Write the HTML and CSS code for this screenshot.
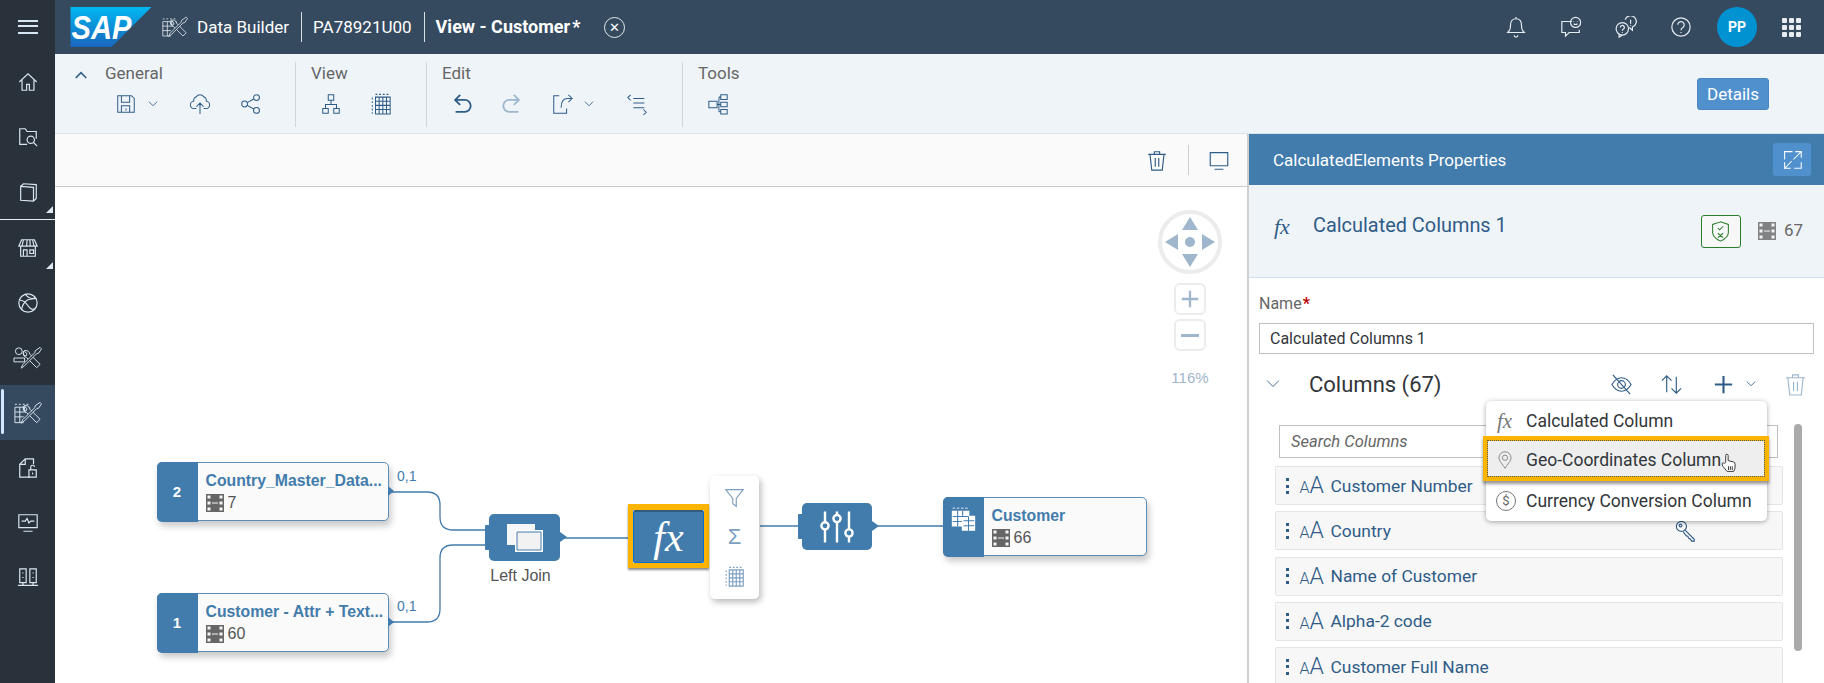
FILE: index.html
```html
<!DOCTYPE html>
<html lang="en">
<head>
<meta charset="utf-8">
<title>Data Builder - View - Customer</title>
<link rel="stylesheet" href="styles.css">
</head>
<body>
<svg class="defs" aria-hidden="true">
  <symbol id="i-db" viewBox="0 0 30 24"><path d="M2 3h2M6 3h2M10 3h2M14 3h2M2 6h15M2 6v16h9M2 11h15M2 16h9M7 6v16M12 6v5M17 6v3"/><path class="tool" d="M11 5a4.500 4.500 0 0 0 3 6.500L24.500 22l3.500-3.500L17.500 8A4.500 4.500 0 0 0 11.500 4.500l3 3-1 2.500-2.500-1z"/><path class="tool" d="M28 1l1.500 1.500-3 4.500-2 .5L12 20l-3.500 2.500L10 19 22.500 6.500l.5-2z"/></symbol>
  <symbol id="i-home" viewBox="0 0 24 24"><path d="M2.500 12 12 3l9.500 9M5.500 10v11h5v-6.500h3V21h5V10"/></symbol>
  <symbol id="i-find" viewBox="0 0 24 24"><path d="M11 20H3V3h6l2 3h10v8"/><circle cx="15" cy="15" r="4"/><path d="m18 18 4 4"/></symbol>
  <symbol id="i-book" viewBox="0 0 24 24"><path d="M4 6v15l14 1V7zM4 6l3-3 14 1v15l-3 3M7 3"/></symbol>
  <symbol id="i-store" viewBox="0 0 24 24"><path d="M5 3h14l3 7H2zM7 3l-1.500 7M11 3l-.5 7M14 3l.5 7M17 3l1.500 7M4 10v11h16V10M7 21v-7h4v7M14 14h4v4h-4z"/></symbol>
  <symbol id="i-globe" viewBox="0 0 24 24"><circle cx="12" cy="12" r="10"/><path d="M3 9c5 0 7 3 9 6s5 5 7 3M20 6c-3 3-6 1-9 3s-5 5-6 10M9 2c2 4 6 6 12 5"/></symbol>
  <symbol id="i-persontools" viewBox="0 0 30 24"><circle cx="6" cy="5" r="3.500"/><path d="M1 12h11v4H1z"/><path class="tool" d="M11 5a4.500 4.500 0 0 0 3 6.500L24.500 22l3.500-3.500L17.500 8A4.500 4.500 0 0 0 11.500 4.500l3 3-1 2.500-2.500-1z"/><path class="tool" d="M28 1l1.500 1.500-3 4.500-2 .5L12 20l-3.500 2.500L10 19 22.500 6.500l.5-2z"/></symbol>
  <symbol id="i-filelock" viewBox="0 0 24 24"><path d="M14 22H3V8l6-6h9v6M3 8h6V2"/><path d="M13 14h8v8h-8zM15 14v-3a2 2 0 0 1 4 0"/><path d="M17 17v2"/></symbol>
  <symbol id="i-pulse" viewBox="0 0 24 24"><path d="M2 3h20v14H2zM7 21h10M5 10h4l2-3 2 5 2-2h4"/></symbol>
  <symbol id="i-servers" viewBox="0 0 24 24"><path d="M3 2h7v15H3zM14 2h7v15h-7zM1 20h22M6.500 17v3M17.500 17v3M6.500 6v1M17.500 6v1M6.500 11v1M17.500 11v1"/></symbol>
  <symbol id="i-bell" viewBox="0 0 24 24"><path d="M3 18c2-2 3-3 3-8s3-7 6-7 6 2 6 7 1 6 3 8zM12 1v2M10 21a2 2 0 0 0 4 0"/></symbol>
  <symbol id="i-chat" viewBox="0 0 24 24"><path d="M13 6H2v12h4v4l4-4h11v-3"/><circle cx="17" cy="7" r="5.500"/><path d="M15 8.500c1 1 3 1 4 0M15 5.500v.5M19 5.500v.5"/></symbol>
  <symbol id="i-ask" viewBox="0 0 24 24"><circle cx="8" cy="14" r="6.800"/><path d="M5.800 12.500a2.200 2.200 0 1 1 3.400 1.800c-.9.600-1.200 1-1.200 1.700M8 17.500v.7M4.500 20v3l3.500-2"/><path d="M11 4a6.300 6.300 0 1 1 8 8v3.500l-3.500-3"/><path d="M17 4v4.500M17 10.200v.7"/></symbol>
  <symbol id="i-help" viewBox="0 0 24 24"><circle cx="12" cy="12" r="10"/><path d="M8.500 9.500a3.500 3.500 0 1 1 5.500 3c-1.500 1-2 1.500-2 3M12 17.500v1"/></symbol>
  <symbol id="i-save" viewBox="0 0 24 24"><path d="M3 3h15l3 3v15H3zM7 3v7h9V3M7 21v-7h9v7M12 17v2"/></symbol>
  <symbol id="i-chev" viewBox="0 0 24 24"><path d="m5 8 7 7 7-7"/></symbol>
  <symbol id="i-cloud" viewBox="0 0 24 24"><path d="M8 17H6a4 4 0 0 1-1-8 5 5 0 0 1 3-5 5 5 0 0 1 8 0 5 5 0 0 1 3 5 4 4 0 0 1-1 8h-2M12 23V11M8 15l4-4 4 4"/></symbol>
  <symbol id="i-share" viewBox="0 0 24 24"><circle cx="5" cy="12" r="3.200"/><circle cx="18" cy="5" r="3.200"/><circle cx="18" cy="19" r="3.200"/><path d="m8 10.500 7-4M8 13.500l7 4"/></symbol>
  <symbol id="i-tree" viewBox="0 0 24 24"><path d="M9 2h6v6H9zM3 17h6v5H3zM15 17h6v5h-6zM12 8v4.500M6 17v-4.500h12V17"/></symbol>
  <symbol id="i-grid" viewBox="0 0 24 24"><path d="M6 1.500h2M10 1.500h2M14 1.500h2M18 1.500h2M2.500 5v2M2.500 9v2M2.500 13v2M2.500 17v2M2.500 21v1.500M6 4.500h16v18.500H6zM6 9h16M6 13.500h16M6 18h16M10 4.500V23M14 4.500V23M18 4.500V23"/></symbol>
  <symbol id="i-undo" viewBox="0 0 24 24"><path d="M10 2 4.500 7.500 10 13M4.500 7.500H15a6.500 6.500 0 0 1 0 13H5"/></symbol>
  <symbol id="i-export" viewBox="0 0 24 24"><path d="M9 3H3v19h14v-5M19 2l4 4-4 4M23 6h-5c-5 0-7 4-7 10"/></symbol>
  <symbol id="i-code" viewBox="0 0 24 24"><path d="M5 2 2 5l3 3M8 6h12M8 11h12M8 16h12M19 18l3 3-3 3"/></symbol>
  <symbol id="i-model" viewBox="0 0 24 24"><path d="M2 9h9v7H2zM15 2h7v5h-7zM15 10h7v5h-7zM15 18h7v5h-7zM11 12.500h4M13 4.500v16M13 4.500h2M13 20.500h2"/></symbol>
  <symbol id="i-trash" viewBox="0 0 24 24"><path d="M2 5h20M9 5V2h6v3M4 5l2 18h12l2-18M10 9v10M14 9v10"/></symbol>
  <symbol id="i-screen" viewBox="0 0 24 24"><path d="M2 3h20v15H2zM7 22h10"/></symbol>
  <symbol id="i-expand" viewBox="0 0 24 24"><path d="M12 3H3v9M15 3h7v7M22 3l-9 9M3 22h7M3 15v7l8-8M22 15v7h-8"/></symbol>
  <symbol id="i-shield" viewBox="0 0 24 24"><path d="M12 1 3 4v9c0 5 5 8 9 10 4-2 9-5 9-10V4zM9 8l2 2 4-4M9 14l6 5M15 14l-6 5"/></symbol>
  <symbol id="i-film" viewBox="0 0 18 18"><path class="film-body" d="M0 0h18v18H0z"/><path class="film-hole" d="M1.500 1.500h3v3h-3zM1.500 7.500h3v3h-3zM1.500 13.500h3v3h-3zM13.500 1.500h3v3h-3zM13.500 7.500h3v3h-3zM13.500 13.500h3v3h-3zM6 8.500h6v1H6z"/></symbol>
  <symbol id="i-eyeoff" viewBox="0 0 24 24"><path d="M2 12c3-5 7-7 10-7s7 2 10 7c-3 5-7 7-10 7s-7-2-10-7z"/><circle cx="12" cy="12" r="4"/><path d="M3 2l18 20"/></symbol>
  <symbol id="i-sort" viewBox="0 0 24 24"><path d="M7 20V3M2 8l5-5 5 5M17 4v17M12 16l5 5 5-5"/></symbol>
  <symbol id="i-plus" viewBox="0 0 24 24"><path d="M12 3v18M3 12h18"/></symbol>
  <symbol id="i-pin" viewBox="0 0 24 24"><path d="M12 23C8 17 4 13 4 9a8 8 0 0 1 16 0c0 4-4 8-8 14z"/><circle cx="12" cy="9" r="3.500"/></symbol>
  <symbol id="i-key" viewBox="0 0 24 24"><circle cx="7" cy="7" r="5.500"/><circle cx="6" cy="6" r="1.500"/><path d="m11 11 10 10v2h-3l-1-2-2-1-1-2-2-1-3-4"/></symbol>
  <symbol id="i-filter" viewBox="0 0 24 24"><path d="M2 3h20l-8 10v9l-4-3v-6z"/></symbol>
  <symbol id="i-sliders" viewBox="0 0 30 30"><path d="M5 2v9M5 17v11M15 2v3M15 11v17M25 2v15M25 23v5"/><circle cx="5" cy="14" r="3"/><circle cx="15" cy="8" r="3"/><circle cx="25" cy="20" r="3"/></symbol>
  <symbol id="i-table" viewBox="0 0 30 30"><path d="M2 2h3M7 2h3M12 2h3M17 2h3"/><path class="solid" d="M1 5h21v6h7v18H13v-5H1z"/><path class="cut" d="M2 12h19M2 18h11M8 5v19M14 5v6M15 17h13M15 23h13M21 12v17"/></symbol>
  <symbol id="i-join" viewBox="0 0 38 30"><path class="solid" d="M1 1h28v21H1z"/><path class="cut-fill" d="M9 7h28v22H9z"/><path class="back-fill" d="M11 9h24v18H11z"/></symbol>
</svg>

<div class="app">
  <nav class="side">
    <div class="side-top"><span class="burger"></span></div>
    <a class="side-item"><svg class="ic ic-side"><use href="#i-home"/></svg></a>
    <a class="side-item"><svg class="ic ic-side"><use href="#i-find"/></svg></a>
    <a class="side-item more"><svg class="ic ic-side"><use href="#i-book"/></svg></a>
    <div class="side-sep"></div>
    <a class="side-item more"><svg class="ic ic-side"><use href="#i-store"/></svg></a>
    <a class="side-item"><svg class="ic ic-side"><use href="#i-globe"/></svg></a>
    <a class="side-item"><svg class="ic ic-side-w"><use href="#i-persontools"/></svg></a>
    <a class="side-item active"><svg class="ic ic-side-w"><use href="#i-db"/></svg></a>
    <a class="side-item"><svg class="ic ic-side"><use href="#i-filelock"/></svg></a>
    <a class="side-item"><svg class="ic ic-side"><use href="#i-pulse"/></svg></a>
    <a class="side-item"><svg class="ic ic-side"><use href="#i-servers"/></svg></a>
  </nav>

  <div class="main">
    <header class="shell">
      <svg class="logo" viewBox="0 0 80 40" role="img" aria-label="SAP">
        <defs><linearGradient id="sapg" x1="0" y1="0" x2="0" y2="1"><stop offset="0" stop-color="#00b8f1"/><stop offset="1" stop-color="#1a66bd"/></linearGradient></defs>
        <path d="M0 0h81L41 40H0z" fill="url(#sapg)"/>
        <text x="1" y="32" class="logo-text" textLength="60" lengthAdjust="spacingAndGlyphs">SAP</text>
      </svg>
      <svg class="ic ic-crumb"><use href="#i-db"/></svg>
      <span class="crumb">Data Builder</span>
      <span class="crumb crumb-b">PA78921U00</span>
      <span class="crumb crumb-b crumb-strong">View - Customer<span class="dirty">*</span></span>
      <span class="close">&#10005;</span>
      <div class="shell-right">
        <svg class="ic ic-shell"><use href="#i-bell"/></svg>
        <svg class="ic ic-shell"><use href="#i-chat"/></svg>
        <svg class="ic ic-shell"><use href="#i-ask"/></svg>
        <svg class="ic ic-shell"><use href="#i-help"/></svg>
        <span class="avatar">PP</span>
        <span class="apps"><i></i><i></i><i></i><i></i><i></i><i></i><i></i><i></i><i></i></span>
      </div>
    </header>

    <section class="toolbar">
      <button class="collapse"><svg class="ic ic-chev-up"><use href="#i-chev"/></svg></button>
      <div class="group g-general">
        <div class="g-title">General</div>
        <div class="g-icons">
          <svg class="ic ic-tb"><use href="#i-save"/></svg>
          <svg class="ic ic-mini"><use href="#i-chev"/></svg>
          <svg class="ic ic-tb gap-l"><use href="#i-cloud"/></svg>
          <svg class="ic ic-tb gap-l"><use href="#i-share"/></svg>
        </div>
      </div>
      <div class="group g-view">
        <div class="g-title">View</div>
        <div class="g-icons">
          <svg class="ic ic-tb"><use href="#i-tree"/></svg>
          <svg class="ic ic-tb gap-m"><use href="#i-grid"/></svg>
        </div>
      </div>
      <div class="group g-edit">
        <div class="g-title">Edit</div>
        <div class="g-icons">
          <svg class="ic ic-tb strong"><use href="#i-undo"/></svg>
          <svg class="ic ic-tb gap-m faded flip"><use href="#i-undo"/></svg>
          <svg class="ic ic-tb gap-m"><use href="#i-export"/></svg>
          <svg class="ic ic-mini"><use href="#i-chev"/></svg>
          <svg class="ic ic-tb gap-s"><use href="#i-code"/></svg>
        </div>
      </div>
      <div class="group g-tools">
        <div class="g-title">Tools</div>
        <div class="g-icons">
          <svg class="ic ic-tb"><use href="#i-model"/></svg>
        </div>
      </div>
      <button class="details">Details</button>
    </section>

    <div class="work">
      <section class="canvas">
        <div class="canvas-bar">
          <svg class="ic ic-bar"><use href="#i-trash"/></svg>
          <span class="bar-sep"></span>
          <svg class="ic ic-bar"><use href="#i-screen"/></svg>
        </div>
        <div class="diagram">
          <svg class="wires" viewBox="0 0 1193 496">
            <path d="M335 305h38q13 0 13 13v12q0 13 13 13h32"/>
            <path d="M335 435h38q13 0 13-13v-51q0-13 13-13h32"/>
            <path d="M506 351h68"/>
            <path d="M706 339h38"/>
            <path d="M818 339h72"/>
          </svg>

          <span class="cardinal c-a">0,1</span>
          <span class="cardinal c-b">0,1</span>

          <div class="node n-country">
            <div class="node-tab">2</div>
            <div class="node-body">
              <div class="node-title">Country_Master_Data...</div>
              <div class="node-count"><svg class="film"><use href="#i-film"/></svg>7</div>
            </div>
            <i class="out-port"></i>
          </div>
          <div class="node n-attr">
            <div class="node-tab">1</div>
            <div class="node-body">
              <div class="node-title">Customer - Attr + Text...</div>
              <div class="node-count"><svg class="film"><use href="#i-film"/></svg>60</div>
            </div>
            <i class="out-port"></i>
          </div>

          <div class="op op-join">
            <i class="in-port"></i>
            <svg class="join-ic" viewBox="0 0 38 30"><use href="#i-join"/></svg>
            <i class="op-out"></i>
          </div>
          <div class="op-label">Left Join</div>

          <div class="calc-focus">
            <div class="calc"><span class="calc-fx">fx</span></div>
          </div>

          <div class="actions">
            <svg class="ic ic-act"><use href="#i-filter"/></svg>
            <span class="sigma">&Sigma;</span>
            <svg class="ic ic-act"><use href="#i-grid"/></svg>
          </div>

          <div class="op op-proj">
            <i class="in-port in-proj"></i>
            <svg class="sliders"><use href="#i-sliders"/></svg>
            <i class="op-out"></i>
          </div>

          <div class="node n-customer">
            <div class="node-tab tab-icon"><svg class="table-ic"><use href="#i-table"/></svg></div>
            <div class="node-body">
              <div class="node-title">Customer</div>
              <div class="node-count"><svg class="film"><use href="#i-film"/></svg>66</div>
            </div>
          </div>

          <div class="nav-ctl">
            <div class="pad">
              <i class="arr up"></i><i class="arr down"></i><i class="arr left"></i><i class="arr right"></i><i class="pad-dot"></i>
            </div>
            <div class="zoom-btn"><svg class="ic ic-zoom"><use href="#i-plus"/></svg></div>
            <div class="zoom-btn"><span class="minus"></span></div>
            <div class="zoom-val">116%</div>
          </div>
        </div>
      </section>

      <aside class="panel">
        <div class="panel-head">
          <span>CalculatedElements Properties</span>
          <button class="expand"><svg class="ic ic-expand"><use href="#i-expand"/></svg></button>
        </div>
        <div class="panel-sub">
          <span class="sub-fx">fx</span>
          <span class="sub-title">Calculated Columns 1</span>
          <button class="valid"><svg class="ic ic-shield"><use href="#i-shield"/></svg></button>
          <svg class="film sub-film"><use href="#i-film"/></svg>
          <span class="sub-count">67</span>
        </div>
        <div class="panel-body">
          <label class="name-label">Name<span class="req">*</span></label>
          <div class="name-input">Calculated Columns 1</div>
          <div class="cols-head">
            <svg class="ic ic-colchev"><use href="#i-chev"/></svg>
            <span class="cols-title">Columns (67)</span>
            <div class="cols-tools">
              <svg class="ic ic-col"><use href="#i-eyeoff"/></svg>
              <svg class="ic ic-col"><use href="#i-sort"/></svg>
              <svg class="ic ic-colplus"><use href="#i-plus"/></svg>
              <svg class="ic ic-colmini"><use href="#i-chev"/></svg>
              <svg class="ic ic-col faded"><use href="#i-trash"/></svg>
            </div>
          </div>
          <div class="cols-list">
            <div class="search">Search Columns</div>
            <div class="row"><span class="dots"></span><span class="aa"><small>A</small>A</span><span class="row-name">Customer Number</span></div>
            <div class="row"><span class="dots"></span><span class="aa"><small>A</small>A</span><span class="row-name">Country</span><svg class="ic ic-key"><use href="#i-key"/></svg></div>
            <div class="row"><span class="dots"></span><span class="aa"><small>A</small>A</span><span class="row-name">Name of Customer</span></div>
            <div class="row"><span class="dots"></span><span class="aa"><small>A</small>A</span><span class="row-name">Alpha-2 code</span></div>
            <div class="row"><span class="dots"></span><span class="aa"><small>A</small>A</span><span class="row-name">Customer Full Name</span></div>
            <div class="scroll-thumb"></div>
          </div>
          <div class="menu">
            <div class="menu-item"><span class="menu-fx">fx</span>Calculated Column</div>
            <div class="menu-item focus"><svg class="ic ic-menu"><use href="#i-pin"/></svg>Geo-Coordinates Column
              <svg class="hand" viewBox="0 0 16 20"><path d="M5 10V2.500a1.300 1.300 0 0 1 2.600 0V8l6 1.500c1 .3 1.400 1 1.400 2V16l-1.500 3.500h-7L2 14l-1-2.500c0-1 1.500-1.500 2.500-.5z"/><path class="hand-l" d="M8 14v4M10 14v4M12 14v4"/></svg>
            </div>
            <div class="menu-item"><span class="menu-dollar">$</span>Currency Conversion Column</div>
          </div>
        </div>
      </aside>
    </div>
  </div>
</div>
</body>
</html>
```
FILE: styles.css
```css
* { box-sizing: border-box; }
html, body { margin: 0; height: 100%; overflow: hidden; }
body { font-family: Roboto, "Liberation Sans", sans-serif; color: #32363a; background: #fff; }
.defs { position: absolute; width: 0; height: 0; }
.ic { fill: none; stroke: currentColor; stroke-width: 1.3; display: block; flex: none; }
button { font: inherit; border: 0; padding: 0; background: none; }
.tool { fill: var(--tool-bg, #29313a); }

.app { display: flex; height: 683px; width: 1824px; }

/* side navigation */
.side { width: 55px; flex: none; background: #29313a; color: #d9e6f2; display: flex; flex-direction: column; }
.side-top { height: 54px; display: flex; align-items: center; justify-content: center; }
.burger { width: 20px; height: 14px; margin-top: -1px; border-top: 2.500px solid #d5e6f5; border-bottom: 2.500px solid #d5e6f5; position: relative; }
.burger::after { content: ""; position: absolute; left: 0; right: 0; top: 3.200px; height: 2.500px; background: #d5e6f5; }
.side-item { height: 55px; display: flex; align-items: center; justify-content: center; position: relative; }
.side-sep { height: 1px; background: #e8eef4; }
.ic-side { width: 22px; height: 22px; }
.ic-side-w { width: 29px; height: 24px; stroke-width: 1; }
.more::after { content: ""; position: absolute; right: 2px; bottom: 6px; border-style: solid; border-width: 0 0 7px 7px; border-color: transparent transparent #dfe9f3 transparent; }
.active { background: #354a5f; --tool-bg: #354a5f; }
.active::before { content: ""; position: absolute; left: 1px; top: 4px; bottom: 6px; width: 3px; border-radius: 2px; background: #d1e8ff; }

.main { flex: 1; min-width: 0; display: flex; flex-direction: column; }

/* shell */
.shell { height: 54px; flex: none; background: #354a5f; color: #fff; display: flex; align-items: center; padding-left: 15px; --tool-bg: #354a5f; }
.logo { width: 81px; height: 40px; margin-right: 10px; }
.logo-text { font: italic 700 33px "Liberation Sans", sans-serif; fill: #fff; }
.ic-crumb { width: 27px; height: 24px; margin-right: 9px; stroke: #e3e9ef; stroke-width: .9; }
.crumb { font-size: 17px; white-space: nowrap; line-height: 30px; }
.crumb-b { border-left: 1px solid #d9dfe5; margin-left: 12px; padding-left: 11px; }
.crumb-strong { font-weight: 700; font-size: 18px; }
.dirty { margin-left: 2px; }
.close { width: 21px; height: 21px; border: 1.300px solid #e6ebf0; border-radius: 50%; margin-left: 24px; font-size: 13px; line-height: 19px; text-align: center; }
.shell-right { margin-left: auto; display: flex; align-items: center; padding-right: 23px; }
.ic-shell { width: 22px; height: 22px; margin-right: 33px; stroke: #e6ecf2; }
.ic-shell:nth-child(4) { margin-right: 25px; }
.avatar { width: 40px; height: 40px; border-radius: 50%; background: #0092d1; font-size: 14px; font-weight: 700; line-height: 40px; text-align: center; margin-right: 25px; }
.apps { display: grid; grid-template-columns: repeat(3, 5px); gap: 2px; width: 19px; }
.apps i { width: 5px; height: 5px; background: #e6ecf2; border-radius: 1px; }

/* toolbar */
.toolbar { height: 80px; flex: none; background: #eff4f9; border-bottom: 1px solid #d9e4ee; display: flex; align-items: flex-start; padding-top: 8px; color: #2f5c87; position: relative; }
.collapse { width: 50px; padding-left: 17px; margin-top: 4px; color: #2f5c87; }
.ic-chev-up { width: 18px; height: 18px; transform: scaleY(-1); stroke-width: 2.200; }
.group { height: 65px; border-right: 1px solid #cfd6dc; flex: none; }
.g-title { font-size: 17px; color: #666; line-height: 22px; margin-top: 0; }
.g-general { width: 191px; }
.g-view { width: 131px; padding-left: 15px; }
.g-edit { width: 256px; padding-left: 15px; }
.g-tools { padding-left: 15px; border-right: 0; }
.g-icons { display: flex; align-items: center; height: 24px; margin-top: 8px; }
.g-general .g-icons { padding-left: 10px; }
.g-view .g-icons { padding-left: 9px; }
.g-edit .g-icons { padding-left: 9px; }
.g-tools .g-icons { padding-left: 9px; }
.ic-tb { width: 22px; height: 22px; stroke-width: 1.100; }
.ic-mini { width: 14px; height: 14px; margin-left: 9px; stroke-width: 1.500; }
.gap-l { margin-left: 29px; }
.gap-m { margin-left: 28px; }
.gap-s { margin-left: 30px; }
.strong { stroke-width: 2; }
.faded { color: #9db7cf; }
.flip { transform: scaleX(-1); stroke-width: 2; }
.details { position: absolute; right: 55px; top: 24px; width: 72px; height: 32px; background: #5091cd; border: 1px solid #4a87bf; border-radius: 3px; color: #fff; font-size: 17px; }

/* workspace */
.work { flex: 1; min-height: 0; display: flex; }
.canvas { flex: 1; min-width: 0; display: flex; flex-direction: column; background: #fff; border-right: 2px solid #cfcfcf; }
.canvas-bar { height: 53px; flex: none; background: #fafafa; border-bottom: 1px solid #ccc; display: flex; align-items: center; justify-content: flex-end; color: #2f5c87; padding-right: 17px; }
.ic-bar { width: 22px; height: 21px; stroke-width: 1.300; }
.bar-sep { width: 1px; height: 30px; background: #d0d0d0; margin: 0 19px 0 20px; }
.diagram { flex: 1; position: relative; font-family: "Liberation Sans", sans-serif; overflow: hidden; }
.wires { position: absolute; left: -1px; top: 0; width: 1193px; height: 496px; fill: none; stroke: #427cac; stroke-width: 1.300; }

.cardinal { position: absolute; font-size: 14px; color: #427cac; }
.c-a { left: 342px; top: 281px; }
.c-b { left: 342px; top: 411px; }

.node { position: absolute; width: 232px; height: 59px; display: flex; background: #fafafa; border: 1.500px solid #5a8db8; border-radius: 5px; box-shadow: 2px 5px 7px rgba(0,0,0,.22); }
.n-country { left: 102px; top: 275px; }
.n-attr { left: 102px; top: 406px; }
.n-customer { left: 888px; top: 310px; width: 204px; }
.node-tab { width: 41px; margin: -1.500px 0 -1.500px -1.500px; background: #427cac; border-radius: 5px 0 0 5px; color: #fff; font-weight: 700; font-size: 15px; display: flex; align-items: center; justify-content: center; }
.tab-icon { align-items: flex-start; padding-top: 9px; }
.table-ic { width: 25px; height: 26px; }
#i-table path { stroke: #fff; }
#i-table .solid { fill: #fff; stroke: none; }
#i-table .cut { stroke: #427cac; stroke-width: 1.300; fill: none; }
.node-body { padding: 8px 0 0 8px; min-width: 0; }
.node-title { font-weight: 700; font-size: 15.800px; line-height: 20px; color: #427cac; white-space: nowrap; }
.node-count { display: flex; align-items: center; gap: 4px; font-size: 16px; line-height: 22px; color: #555; margin-top: 1px; }
.film { width: 18px; height: 18px; display: block; flex: none; }
#i-film .film-body { fill: #666; }
#i-film .film-hole { fill: #f5f5f5; }
.out-port { position: absolute; right: -6px; top: 23px; border-style: solid; border-width: 5px 0 5px 6px; border-color: transparent transparent transparent #427cac; }

.op { position: absolute; background: #427cac; border-radius: 5px; display: flex; align-items: center; justify-content: center; }
.op-join { left: 434px; top: 327px; width: 71px; height: 47px; }
.op-proj { left: 747px; top: 316px; width: 70px; height: 47px; }
.in-port { position: absolute; left: -4px; top: 11px; width: 5px; height: 25px; background: #427cac; border-radius: 1px 0 0 1px; }
.in-proj { top: 11px; }
.op-out { position: absolute; right: -7px; top: 18px; border-style: solid; border-width: 5px 0 5px 7px; border-color: transparent transparent transparent #427cac; }
.join-ic { width: 38px; height: 30px; }
#i-join .solid { fill: #f4f6f8; stroke: none; }
#i-join .cut-fill { fill: #fff; stroke: none; }
#i-join .back-fill { fill: #f2f2f2; stroke: #427cac; stroke-width: 1; }
.op-label { position: absolute; left: 420px; top: 380px; width: 91px; text-align: center; font-size: 16px; color: #555; }
.sliders { width: 36px; height: 36px; fill: none; stroke: #fff; stroke-width: 2; }

.calc-focus { position: absolute; left: 573px; top: 317px; width: 81px; height: 64px; border: 5px solid #fbb500; border-top-width: 6px; box-shadow: 0 2px 2px rgba(0,0,0,.45); }
.calc { height: 100%; background: #427cac; border: 1px solid #0a6ed1; border-top: 2px solid #345b7c; border-radius: 2px; display: flex; align-items: center; justify-content: center; }
.calc-fx { font: italic 400 42px "Liberation Serif", serif; color: #fff; line-height: 1; }
.actions { position: absolute; left: 655px; top: 289px; width: 49px; height: 123px; background: #fff; border-radius: 5px; box-shadow: 2px 3px 6px rgba(0,0,0,.28); display: flex; flex-direction: column; align-items: center; justify-content: space-between; padding: 11px 0 12px; color: #7d9fc0; }
.ic-act { width: 21px; height: 21px; }
.sigma { font-size: 22px; line-height: 24px; color: #7d9fc0; }

.nav-ctl { position: absolute; left: 1103px; top: 23px; width: 64px; display: flex; flex-direction: column; align-items: center; }
.pad { width: 64px; height: 64px; border: 4px solid #ececec; border-radius: 50%; position: relative; margin-bottom: 9px; }
.arr { position: absolute; border-style: solid; border-color: transparent; }
.up { left: 20px; top: 3px; border-width: 0 8px 13px 8px; border-bottom-color: #9fb6cc; }
.down { left: 20px; bottom: 3px; border-width: 13px 8px 0 8px; border-top-color: #9fb6cc; }
.left { left: 3px; top: 20px; border-width: 8px 13px 8px 0; border-right-color: #9fb6cc; }
.right { right: 3px; top: 20px; border-width: 8px 0 8px 13px; border-left-color: #9fb6cc; }
.pad-dot { position: absolute; left: 23px; top: 23px; width: 10px; height: 10px; border-radius: 50%; background: #9fb6cc; }
.zoom-btn { width: 32px; height: 32px; border: 2px solid #ececec; border-radius: 6px; margin-bottom: 4px; display: flex; align-items: center; justify-content: center; background: #fff; }
.ic-zoom { width: 22px; height: 22px; color: #9fb6cc; stroke-width: 2.500; }
.minus { width: 18px; height: 3px; background: #9fb6cc; }
.zoom-val { font-size: 15px; color: #9fb6cc; margin-top: 14px; }

/* panel */
.panel { width: 575px; flex: none; display: flex; flex-direction: column; background: #fff; }
.panel-head { height: 51px; flex: none; background: #427cac; color: #fff; font-size: 17px; display: flex; align-items: center; justify-content: space-between; padding: 0 13px 0 24px; }
.expand { width: 38px; height: 33px; background: #5091cd; border-radius: 3px; display: flex; align-items: center; justify-content: center; color: #fff; }
.ic-expand { width: 21px; height: 21px; stroke-width: 1.200; }
.panel-sub { height: 93px; flex: none; background: #eff4f9; border-bottom: 1px solid #cfdeec; display: flex; align-items: flex-start; padding: 30px 21px 0 25px; }
.sub-fx { font: italic 400 22px "Liberation Serif", serif; color: #2f5c87; width: 39px; line-height: 24px; }
.sub-title { font-size: 19.900px; color: #2f5c87; line-height: 22px; }
.valid { margin-left: auto; width: 40px; height: 33px; border: 1px solid #2b7c2b; border-radius: 3px; background: #f7f7f7; display: flex; align-items: center; justify-content: center; color: #2b7c2b; }
.ic-shield { width: 21px; height: 23px; stroke-width: 1.200; }
.sub-film { margin: 7px 8px 0 17px; opacity: .8; }
.sub-count { font-size: 17px; color: #666; line-height: 30px; }

.panel-body { flex: 1; min-height: 0; position: relative; overflow: hidden; padding: 15px 10px 0 10px; }
.name-label { display: block; font-size: 16px; color: #666; line-height: 22px; }
.req { color: #bb0000; font-weight: 700; margin-left: 1px; }
.name-input { height: 31px; margin-top: 8px; border: 1px solid #bfbfbf; font-size: 16px; line-height: 29px; padding-left: 10px; color: #32363a; }
.cols-head { height: 30px; margin-top: 15px; display: flex; align-items: center; padding-left: 4px; color: #2f5c87; }
.ic-colchev { width: 20px; height: 20px; margin-right: 26px; stroke-width: 1.100; }
.cols-title { font-size: 22px; color: #32363a; }
.cols-tools { margin-left: auto; display: flex; align-items: center; padding-right: 0; }
.ic-col { width: 23px; height: 23px; margin-right: 27px; stroke-width: 1.200; }
.ic-col:first-child { margin-right: 27px; transform: translateX(-2px); }
.ic-col:nth-child(2) { transform: translateX(-2px); }
.ic-col:last-child { margin-right: 7px; margin-left: 26px; stroke-width: 1.200; }
.ic-colplus { width: 23px; height: 23px; stroke-width: 2.200; }
.ic-colmini { width: 14px; height: 14px; margin-left: 9px; stroke-width: 1.500; }
.cols-list { position: relative; margin-top: 26px; padding-left: 16px; padding-right: 31px; }
.search { height: 33px; margin: 0 5px 8px 4px; border: 1px solid #bfbfbf; font-style: italic; font-size: 16.500px; line-height: 31px; color: #666; padding-left: 11px; }
.row { height: 39px; margin-bottom: 6.300px; border: 1px solid #e5e5e5; border-radius: 2px; background: #f7f7f7; display: flex; align-items: center; padding-left: 10px; color: #2f5c87; }
.dots { width: 2.500px; height: 16px; background: repeating-linear-gradient(#2f5c87 0 3px, transparent 3px 6.500px); margin-right: 11px; }
.aa { font-size: 23px; font-weight: 300; width: 31px; line-height: 1; }
.aa small { font-size: 16px; }
.row-name { font-size: 17.400px; }
.ic-key { width: 22px; height: 22px; margin-left: 284px; stroke-width: 1.200; }
.scroll-thumb { position: absolute; right: 12px; top: -1px; width: 8px; height: 227px; background: #aaa; border-radius: 4px; }

.menu { position: absolute; left: 237px; top: 123px; width: 281px; height: 120px; background: #fff; border-radius: 5px; box-shadow: 0 1px 5px rgba(0,0,0,.35); font-size: 17.500px; }
.menu-item { height: 40px; display: flex; align-items: center; padding-left: 40px; position: relative; white-space: nowrap; }
.menu-fx { position: absolute; left: 11px; font: italic 400 21px "Liberation Serif", serif; color: #777; }
.ic-menu { position: absolute; left: 11px; width: 18px; height: 20px; color: #777; stroke-width: 1.100; }
.menu-dollar { position: absolute; left: 10px; width: 20px; height: 20px; border: 1px solid #777; border-radius: 50%; font-size: 13px; line-height: 18px; text-align: center; color: #666; }
.focus { margin: -5px -2px 0 -3px; height: 45px; padding: 3px 0 0 38px; border: 5px solid #fbb500; background: #eee; box-shadow: 0 3px 3px rgba(0,0,0,.4); outline: 1px dotted #555; outline-offset: -5px; z-index: 1; }
.focus .ic-menu { left: 8px; }
.hand { position: absolute; left: 233px; top: 12px; width: 15px; height: 19px; fill: #fff; stroke: #333; stroke-width: 1; }
.hand-l { fill: none; }
```
